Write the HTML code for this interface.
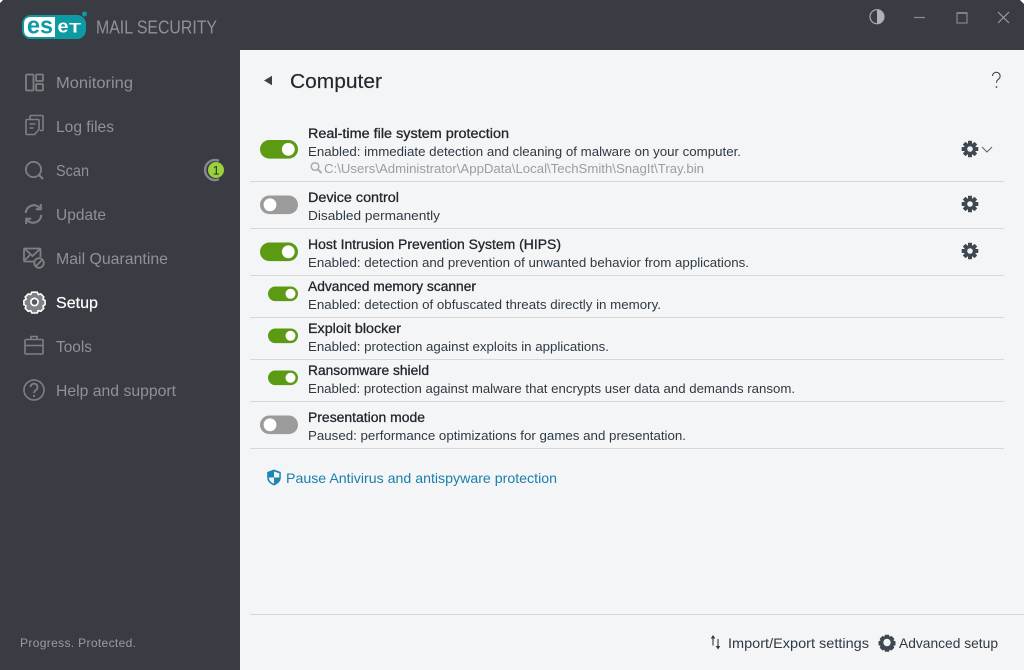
<!DOCTYPE html>
<html><head><meta charset="utf-8"><title>ESET Mail Security</title>
<style>
html,body{margin:0;padding:0;background:#fff;width:1024px;height:670px;overflow:hidden}
svg{display:block}
text{font-family:"Liberation Sans",sans-serif;font-size:13px;fill:#2f3a43}
.b{font-size:13.5px;fill:#1f262d;stroke:#1f262d;stroke-width:.3}
.n{font-size:16px;fill:#8f9295}
.i{fill:none;stroke:#7d8083;stroke-width:1.8}
</style></head><body>
<svg width="1024" height="670" viewBox="0 0 1024 670" xmlns="http://www.w3.org/2000/svg">
<defs>
<g id="gear">
<g fill="#3f4850">
<rect x="-2" y="-8.300" width="4" height="16.600" rx=".5"/>
<rect x="-2" y="-8.300" width="4" height="16.600" rx=".5" transform="rotate(45)"/>
<rect x="-2" y="-8.300" width="4" height="16.600" rx=".5" transform="rotate(90)"/>
<rect x="-2" y="-8.300" width="4" height="16.600" rx=".5" transform="rotate(135)"/>
<circle r="6"/>
</g>
<circle r="2.800" fill="#f3f5f7"/>
</g>
<g id="on"><rect width="38" height="18.600" rx="9.300" fill="#5b9a12"/><circle cx="28.300" cy="9.300" r="6.400" fill="#fff"/></g>
<g id="off"><rect width="38" height="18.600" rx="9.300" fill="#9b9b9b"/><circle cx="10" cy="9.300" r="6.400" fill="#fff"/></g>
<g id="son"><rect width="30" height="14.600" rx="7.300" fill="#5b9a12"/><circle cx="22.500" cy="7.300" r="5" fill="#fff"/></g>
</defs>

<rect width="1024" height="670" fill="#f3f5f7"/>
<rect width="1024" height="50" fill="#393d43"/>
<rect width="240" height="670" fill="#393d43"/>
<path d="M0 0h3L0 3zM1024 0h-4l4 4z" fill="#fff"/>

<!-- logo -->
<rect x="22" y="15" width="64" height="24" rx="9" fill="#0e9aa3"/>
<path d="M31 17H55V37H31Q24 37 24 30V24Q24 17 31 17Z" fill="#fff"/>
<text x="27" y="33.500" textLength="26" lengthAdjust="spacingAndGlyphs" style="font-size:24px;font-weight:bold;fill:#0e9aa3">es</text>
<text x="57.500" y="32.500" textLength="11" lengthAdjust="spacingAndGlyphs" style="font-size:18px;font-weight:bold;fill:#fff">e</text>
<text x="69" y="32.500" textLength="12" lengthAdjust="spacingAndGlyphs" style="font-size:14px;font-weight:bold;fill:#fff">T</text>
<circle cx="84.500" cy="14" r="2.500" fill="#0e9aa3"/>
<text x="96" y="33.500" textLength="121" lengthAdjust="spacingAndGlyphs" style="font-size:18.500px;fill:#8f9295">MAIL SECURITY</text>

<!-- nav -->
<text class="n" x="56" y="88" textLength="77" lengthAdjust="spacingAndGlyphs">Monitoring</text>
<text class="n" x="56" y="132" textLength="58" lengthAdjust="spacingAndGlyphs">Log files</text>
<text class="n" x="56" y="176" textLength="33" lengthAdjust="spacingAndGlyphs">Scan</text>
<text class="n" x="56" y="220" textLength="50" lengthAdjust="spacingAndGlyphs">Update</text>
<text class="n" x="56" y="264" textLength="112" lengthAdjust="spacingAndGlyphs">Mail Quarantine</text>
<text class="n" x="56" y="308" textLength="42" lengthAdjust="spacingAndGlyphs" style="fill:#fff;stroke:#fff;stroke-width:.2">Setup</text>
<text class="n" x="56" y="352" textLength="36" lengthAdjust="spacingAndGlyphs">Tools</text>
<text class="n" x="56" y="396" textLength="120" lengthAdjust="spacingAndGlyphs">Help and support</text>
<text x="20" y="647" textLength="116" style="font-size:12px;fill:#9a9c9f">Progress. Protected.</text>

<!-- nav icons -->
<g class="i">
<rect x="26" y="74.500" width="7.500" height="16" rx="1"/>
<rect x="36" y="74.500" width="7" height="6.500" rx="1"/><rect x="36" y="84" width="7" height="6.500" rx="1"/>
<path d="M30 119v-2.500a1 1 0 0 1 1-1h11a1 1 0 0 1 1 1v13a1 1 0 0 1-1 1h-2" stroke-width="1.600"/>
<path d="M27 119.500h11a1 1 0 0 1 1 1v9l-4.500 5H27a1 1 0 0 1-1-1v-13a1 1 0 0 1 1-1zM29.500 124h6M29.500 128h4" stroke-width="1.600"/>
<circle cx="33.500" cy="169.500" r="7.600"/><path d="M39 175l4 4" stroke-width="2.200"/>
<path d="M25.800 213a8 8 0 0 1 14-5M41.200 215a8 8 0 0 1-14 5" stroke-width="2.200"/>
<path d="M40.800 204v5.200h-5M26.200 224v-5.200h5" stroke-width="2"/>
<path d="M34.500 261.500h-9.500a1 1 0 0 1-1-1v-11a1 1 0 0 1 1-1h14.500a1 1 0 0 1 1 1v7.500M25 249l7.500 7 7.500-7M25 260l5-5"/>
<circle cx="39" cy="263" r="4.800"/><path d="M35.800 266.200l6.500-6.500"/>
<rect x="25" y="339.500" width="18" height="14.500" rx="1" stroke-width="1.600"/><path d="M25 345.500h18M31 339.500v-3h6v3" stroke-width="1.600"/>
<circle cx="34" cy="390" r="10" stroke-width="1.600"/><path d="M30.500 387a3.500 3.500 0 1 1 5.500 3c-1.300 1-2 1.500-2 3"/>
<circle cx="34" cy="396" r="1.100" fill="#7d8083" stroke="none"/>
</g>
<g transform="translate(34.500 302)">
<path d="M-2.800-9.800h5.600l1 2.400 2.500-.7 3 3-.9 2.400 2.200 1.200v4.200l-2.200 1.200.9 2.400-3 3-2.500-.7-1 2.400h-5.600l-1-2.400-2.500.7-3-3 .9-2.400-2.200-1.200v-4.200l2.200-1.200-.9-2.400 3-3 2.500.7z" fill="#7f8285" stroke="#fff" stroke-width="1.600" stroke-linejoin="round"/>
<circle r="3.600" fill="#55585c" stroke="#fff" stroke-width="1.700"/>
</g>

<!-- badge -->
<path d="M219 160.800a10 10 0 1 0 0 18.400" fill="none" stroke="#84888b" stroke-width="2.400"/>
<circle cx="216" cy="170" r="8" fill="#9ad13c"/>
<text x="212.800" y="174.500" style="font-size:12px;fill:#20282e">1</text>

<!-- window controls -->
<circle cx="877" cy="16.700" r="7" fill="none" stroke="#a9abad" stroke-width="1.200"/>
<path d="M877 9.700a7 7 0 0 1 0 14z" fill="#b0b2b4"/>
<path d="M914 17.500h11" stroke="#8a8d90" stroke-width="1.200"/>
<rect x="957" y="13" width="10" height="10" fill="none" stroke="#85888b" stroke-width="1.200"/>
<path d="M957 13h10" stroke="#85888b" stroke-width="1.800"/>
<path d="M998 12l11 11M1009 12l-11 11" stroke="#9a9c9f" stroke-width="1.200"/>

<!-- header -->
<path d="M264 80.500l8-4.800v9.600z" fill="#3a434b"/>
<text x="290" y="88" textLength="92" lengthAdjust="spacingAndGlyphs" style="font-size:20px;fill:#1f262d;stroke:#1f262d;stroke-width:.15">Computer</text>
<path d="M992.500 76a3.800 3.800 0 1 1 6 3.200c-1.400 1-2 1.800-2 3.600" fill="none" stroke="#3f4850" stroke-width="1.100"/>
<circle cx="996.500" cy="87" r=".9" fill="#3f4850"/>

<!-- separators -->
<g fill="#d5d7d9">
<rect x="250" y="181" width="754" height="1"/>
<rect x="250" y="228" width="754" height="1"/>
<rect x="250" y="275" width="754" height="1"/>
<rect x="250" y="317" width="754" height="1"/>
<rect x="250" y="359" width="754" height="1"/>
<rect x="250" y="401" width="754" height="1"/>
<rect x="250" y="448" width="754" height="1"/>
<rect x="250" y="614" width="774" height="1"/>
</g>

<!-- toggles -->
<use href="#on" x="260" y="140"/>
<use href="#off" x="260" y="195.500"/>
<use href="#on" x="260" y="242.500"/>
<use href="#son" x="268" y="286.500"/>
<use href="#son" x="268" y="328.500"/>
<use href="#son" x="268" y="370.500"/>
<use href="#off" x="260" y="415.500"/>

<!-- rows -->
<text class="b" x="308" y="138" textLength="201" lengthAdjust="spacingAndGlyphs">Real-time file system protection</text>
<text x="308" y="156" textLength="433" lengthAdjust="spacingAndGlyphs">Enabled: immediate detection and cleaning of malware on your computer.</text>
<circle cx="315" cy="166.500" r="3.800" fill="none" stroke="#a9abad" stroke-width="1.500"/><path d="M318 169.500l3.500 3.500" stroke="#a9abad" stroke-width="2"/>
<text x="324" y="173" textLength="380" lengthAdjust="spacingAndGlyphs" style="fill:#9a9ea2">C:\Users\Administrator\AppData\Local\TechSmith\SnagIt\Tray.bin</text>

<text class="b" x="308" y="202" textLength="91" lengthAdjust="spacingAndGlyphs">Device control</text>
<text x="308" y="220" textLength="132" lengthAdjust="spacingAndGlyphs">Disabled permanently</text>

<text class="b" x="308" y="249" textLength="253" lengthAdjust="spacingAndGlyphs">Host Intrusion Prevention System (HIPS)</text>
<text x="308" y="267" textLength="441" lengthAdjust="spacingAndGlyphs">Enabled: detection and prevention of unwanted behavior from applications.</text>

<text class="b" x="308" y="291" textLength="168" lengthAdjust="spacingAndGlyphs">Advanced memory scanner</text>
<text x="308" y="309" textLength="353" lengthAdjust="spacingAndGlyphs">Enabled: detection of obfuscated threats directly in memory.</text>

<text class="b" x="308" y="333" textLength="93" lengthAdjust="spacingAndGlyphs">Exploit blocker</text>
<text x="308" y="351" textLength="301" lengthAdjust="spacingAndGlyphs">Enabled: protection against exploits in applications.</text>

<text class="b" x="308" y="375" textLength="121" lengthAdjust="spacingAndGlyphs">Ransomware shield</text>
<text x="308" y="393" textLength="487" lengthAdjust="spacingAndGlyphs">Enabled: protection against malware that encrypts user data and demands ransom.</text>

<text class="b" x="308" y="422" textLength="117" lengthAdjust="spacingAndGlyphs">Presentation mode</text>
<text x="308" y="440" textLength="378" lengthAdjust="spacingAndGlyphs">Paused: performance optimizations for games and presentation.</text>

<!-- gears -->
<use href="#gear" x="970" y="149"/>
<path d="M982 147l5 5 5-5" fill="none" stroke="#5a636b" stroke-width="1"/>
<use href="#gear" x="970" y="204"/>
<use href="#gear" x="970" y="251"/>

<!-- link -->
<path d="M274 469.500l6.800 2.500v5.500c0 4-3 6.300-6.800 8-3.800-1.700-6.800-4-6.800-8V472z" fill="#1b86b4"/>
<path d="M274 471.500l5.300 1.800v4.200H274zM274 477.500v6.300c-2.600-1.300-5-3-5.200-6.300z" fill="#f3f5f7"/>
<text x="286" y="483" textLength="271" lengthAdjust="spacingAndGlyphs" style="font-size:14px;fill:#1b7fab">Pause Antivirus and antispyware protection</text>

<!-- footer -->
<path d="M713 645.500v-8M718 639v8" fill="none" stroke="#2f3a43" stroke-width="1.100"/>
<path d="M710.700 638.500l2.300-3.500 2.300 3.500zM715.700 646l2.300 3.500 2.300-3.500z" fill="#2f3a43"/>
<text x="728" y="648" textLength="141" lengthAdjust="spacingAndGlyphs" style="font-size:14px">Import/Export settings</text>
<g transform="translate(887 642.500)">
<path d="M-2-7.800h4l.6 2 1.900-.8 2.800 2.800-.8 1.900 2 .6v4l-2 .6.800 1.900-2.800 2.800-1.900-.8-.6 2h-4l-.6-2-1.900.8-2.800-2.800.8-1.900-2-.6v-4l2-.6-.8-1.900 2.800-2.800 1.900.8z" fill="#3f4850"/>
<circle r="3.700" fill="#f3f5f7"/>
</g>
<text x="899" y="648" textLength="99" lengthAdjust="spacingAndGlyphs" style="font-size:14px">Advanced setup</text>
</svg>
</body></html>
